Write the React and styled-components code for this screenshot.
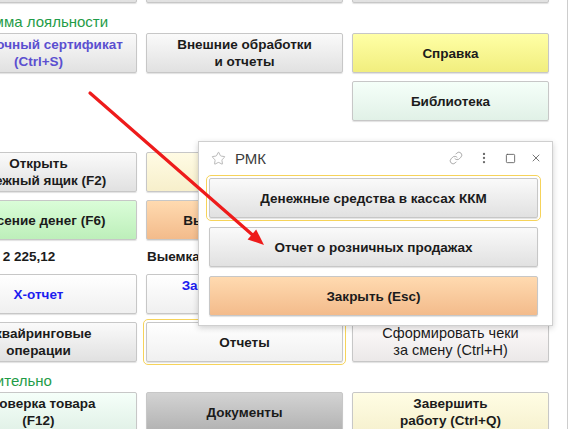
import { styled, createGlobalStyle, css } from "styled-components";
import { Star, Link, EllipsisVertical, Square, X } from "lucide-react";

const GlobalStyle = createGlobalStyle`
  html, body {
    margin: 0;
    padding: 0;
    background: #ffffff;
    overflow: hidden;
  }
  body {
    font-family: "Liberation Sans", Arial, sans-serif;
    color: #1b1b1b;
  }
`;

const tones = {
  gray: ["#fafafa", "#e1e1e1"],
  white: ["#ffffff", "#f0f0f0"],
  yellow: ["#ffffa6", "#f1ee7e"],
  mint: ["#f5fff9", "#e1f1e7"],
  green: ["#dafdd8", "#bdefba"],
  orange: ["#ffdab0", "#f3bb8b"],
  cream: ["#fffbe4", "#f7efcb"],
  rose: ["#fefcfc", "#ebe8e8"],
  dark: ["#d3d3d3", "#b2b2b2"],
  pale: ["#fffde4", "#f6f1cf"],
};

const FormButtons = () => {
  return (
    <Form>
      <Grid>
        <Btn $tone="gray" />
        <Btn $tone="gray" />
        <Btn $tone="gray" />
      </Grid>

      <GroupTitle>Программа лояльности</GroupTitle>
      <Grid>
        <Btn $tone="gray" $ink="#5b4fd0">{"Подарочный сертификат\n(Ctrl+S)"}</Btn>
        <Btn $tone="gray">{"Внешние обработки\nи отчеты"}</Btn>
        <Btn $tone="yellow">Справка</Btn>
        <Empty />
        <Empty />
        <Btn $tone="mint">Библиотека</Btn>
      </Grid>

      <Grid $mt={31}>
        <Btn $tone="gray">{"Открыть\nденежный ящик (F2)"}</Btn>
        <Btn $tone="cream">{"Открыть\nсмену"}</Btn>
        <Btn $tone="gray" />
        <Btn $tone="green">Внесение денег (F6)</Btn>
        <Btn $tone="orange">Выемка денег (F7)</Btn>
        <Btn $tone="gray" />
        <Info>Остаток: 2 225,12</Info>
        <Info>Выемка: 0,00</Info>
        <Info />
        <Btn $tone="white" $ink="#1d1df0">Х-отчет</Btn>
        <Btn $tone="white" $ink="#1d1df0">{"Закрыть кассовую\nсмену (Ctrl+Z)"}</Btn>
        <Empty />
        <Btn $tone="gray">{"Эквайринговые\nоперации"}</Btn>
        <Btn $tone="white" $focus>Отчеты</Btn>
        <Btn $tone="rose" $weight={400} $size={14.5}>{"Сформировать чеки\nза смену (Ctrl+H)"}</Btn>
      </Grid>

      <GroupTitle>Дополнительно</GroupTitle>
      <Grid>
        <Btn $tone="mint">{"Проверка товара\n(F12)"}</Btn>
        <Btn $tone="dark">Документы</Btn>
        <Btn $tone="pale">{"Завершить\nработу (Ctrl+Q)"}</Btn>
      </Grid>
    </Form>
  );
};

const RmkDialog = () => {
  return (
    <Dialog>
      <DialogHeader>
        <Star size={15} strokeWidth={1.3} color="#a9a9a9" />
        <DialogTitle>РМК</DialogTitle>
        <HeaderTools>
          <Link size={14} strokeWidth={1.4} color="#9a9a9a" />
          <EllipsisVertical size={14} strokeWidth={2} color="#6d6d6d" />
          <Square size={11} strokeWidth={1.8} color="#555555" />
          <X size={12} strokeWidth={1.6} color="#555555" />
        </HeaderTools>
      </DialogHeader>
      <DialogBody>
        <Btn $tone="gray" $focus>Денежные средства в кассах ККМ</Btn>
        <Btn $tone="gray">Отчет о розничных продажах</Btn>
        <Btn $tone="orange">Закрыть (Esc)</Btn>
      </DialogBody>
    </Dialog>
  );
};

const App = () => {
  return (
    <>
      <GlobalStyle />
      <Page>
        <Main>
          <FormButtons />
        </Main>
        <EdgeLine />
        <RmkDialog />
        <Pointer width="569" height="429" viewBox="0 0 569 429">
          <line x1="90" y1="93" x2="252" y2="234.5" stroke="#ee1b1b" strokeWidth="3.2" strokeLinecap="round" />
          <polygon points="264,245 247.6,239.4 256.2,229.6" fill="#ee1b1b" />
        </Pointer>
      </Page>
    </>
  );
};

const Page = styled.div`
  position: relative;
  display: flex;
  width: 569px;
  height: 429px;
  overflow: hidden;
`;

const Main = styled.div`
  width: 567px;
  height: 429px;
  overflow: hidden;
`;

const EdgeLine = styled.div`
  width: 1px;
  height: 100%;
  background: #cdcdcd;
`;

const Form = styled.div`
  width: 609px;
  margin-left: -60px;
  margin-top: -37px;
  display: flex;
  flex-direction: column;
`;

const Grid = styled.div`
  display: grid;
  grid-template-columns: repeat(3, 197px);
  column-gap: 9px;
  row-gap: 8px;
  margin-top: ${({ $mt }) => $mt || 0}px;
`;

const GroupTitle = styled.div`
  height: 30px;
  box-sizing: border-box;
  padding: 9px 0 1px 4px;
  font-size: 15px;
  line-height: 20px;
  color: #1f9c48;
`;

const Empty = styled.div`
  height: 40px;
`;

const Info = styled.div`
  height: 18px;
  padding-left: 1px;
  font-weight: bold;
  font-size: 13.5px;
  line-height: 18px;
  white-space: nowrap;
`;

const Btn = styled.button`
  box-sizing: border-box;
  height: 40px;
  width: 100%;
  margin: 0;
  padding: 0 4px;
  border: 1px solid #c7c7c7;
  border-radius: 2px;
  background: linear-gradient(
    ${({ $tone }) => tones[$tone][0]},
    ${({ $tone }) => tones[$tone][1]}
  );
  box-shadow: 0 1px 1px rgba(0, 0, 0, 0.12);
  font-family: "Liberation Sans", Arial, sans-serif;
  font-weight: ${({ $weight }) => $weight || 700};
  font-size: ${({ $size }) => $size || 13.5}px;
  line-height: 17px;
  color: ${({ $ink }) => $ink || "#1b1b1b"};
  text-align: center;
  white-space: pre-line;
  cursor: pointer;

  ${({ $focus }) =>
    $focus &&
    css`
      outline: 1px solid #f6d35a;
      outline-offset: 2px;
    `}
`;

const Dialog = styled.div`
  position: absolute;
  left: 198px;
  top: 141px;
  width: 355px;
  box-sizing: border-box;
  background: #ffffff;
  border: 1px solid #cfcfcf;
  box-shadow: 0 2px 6px rgba(0, 0, 0, 0.18);
`;

const DialogHeader = styled.div`
  height: 32px;
  display: flex;
  align-items: center;
  padding: 0 10px 0 12px;
`;

const DialogTitle = styled.span`
  margin-left: 9px;
  font-size: 15px;
  color: #3c3c3c;
`;

const HeaderTools = styled.div`
  margin-left: auto;
  display: flex;
  align-items: center;
  gap: 14px;
`;

const DialogBody = styled.div`
  display: flex;
  flex-direction: column;
  gap: 9px;
  padding: 4px 14px 9px 10px;
`;

const Pointer = styled.svg`
  position: absolute;
  left: 0;
  top: 0;
  pointer-events: none;
`;

export default App;
